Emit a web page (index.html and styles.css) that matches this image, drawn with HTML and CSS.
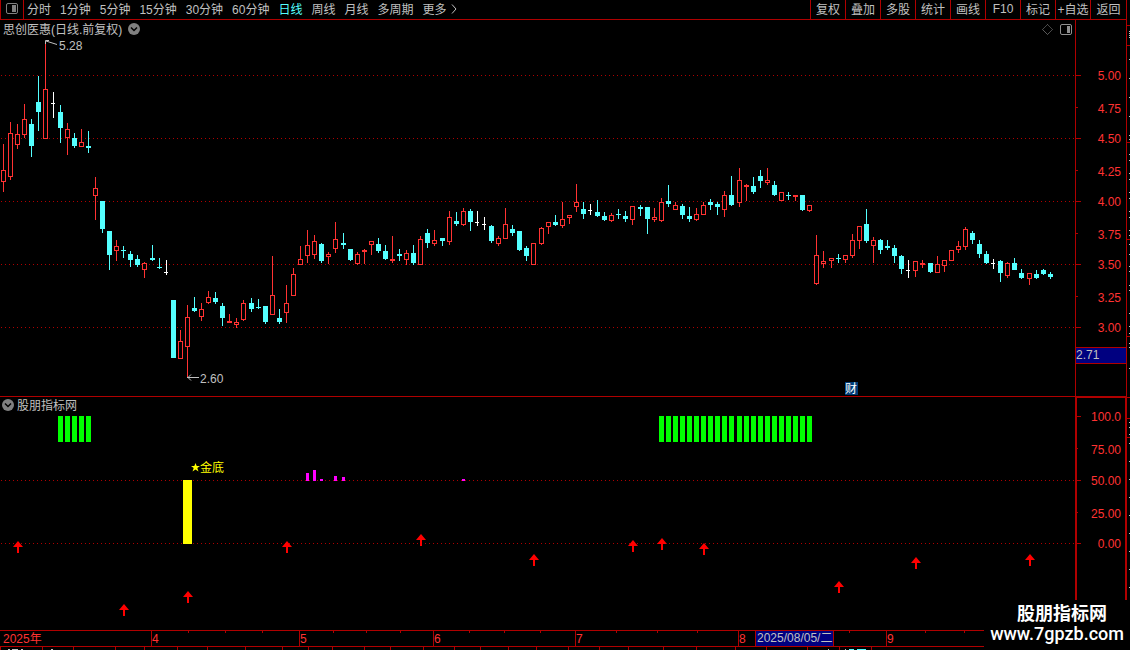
FILE: index.html
```html
<!DOCTYPE html>
<html lang="zh-CN">
<head>
  <meta charset="UTF-8">
  <title>思创医惠 日线</title>
  <link rel="stylesheet" href="styles.css">
</head>
<body>
<div class="terminal">

  <div class="workspace">
    <nav class="toolbar">
      <button type="button" class="panelToggle" aria-label="侧栏">
        <svg width="12" height="11"><rect x="0.5" y="0.5" width="11" height="10" rx="1.5" fill="none" stroke="#808080"/><rect x="6" y="2" width="4" height="7" fill="#808080"/></svg>
      </button>
      <div class="periods">
        <button type="button">分时</button>
        <button type="button">1分钟</button>
        <button type="button">5分钟</button>
        <button type="button">15分钟</button>
        <button type="button">30分钟</button>
        <button type="button">60分钟</button>
        <button type="button" class="active">日线</button>
        <button type="button">周线</button>
        <button type="button">月线</button>
        <button type="button">多周期</button>
        <button type="button" class="more">更多
          <svg width="6" height="10"><path d="M1 0.5L5 5L1 9.5" fill="none" stroke="#c0c0c0"/></svg>
        </button>
      </div>
      <div class="tools">
        <button type="button">复权</button>
        <button type="button">叠加</button>
        <button type="button">多股</button>
        <button type="button">统计</button>
        <button type="button">画线</button>
        <button type="button">F10</button>
        <button type="button">标记</button>
        <button type="button">+自选</button>
        <button type="button">返回</button>
      </div>
    </nav>

    <section class="panel pricePanel">
      <div class="plot">
        <svg class="chart" id="priceChart"></svg>
        <div class="panelHeader">
          <span>思创医惠(日线.前复权)</span>
          <button type="button" class="round" aria-label="展开">
            <svg width="12" height="12"><circle cx="6" cy="6" r="6" fill="#808080"/><path d="M3 4.5L6 7.5L9 4.5" fill="none" stroke="#000" stroke-width="1.5"/></svg>
          </button>
          <div class="panelIcons">
            <svg width="11" height="11"><path d="M5.5 0.5L10.5 5.5L5.5 10.5L0.5 5.5Z" fill="none" stroke="#808080" stroke-dasharray="1 0.5"/></svg>
            <svg width="12" height="11"><rect x="0.5" y="0.5" width="11" height="10" rx="1.5" fill="none" stroke="#909090"/><rect x="7" y="2" width="3" height="7" fill="#909090"/></svg>
          </div>
        </div>
      </div>
      <svg class="axis" id="priceAxis"></svg>
    </section>

    <section class="panel indicatorPanel">
      <div class="plot">
        <svg class="chart" id="indicatorChart"></svg>
        <div class="panelHeader">
          <button type="button" class="round" aria-label="展开">
            <svg width="12" height="12"><circle cx="6" cy="6" r="6" fill="#808080"/><path d="M3 4.5L6 7.5L9 4.5" fill="none" stroke="#000" stroke-width="1.5"/></svg>
          </button>
          <span>股朋指标网</span>
        </div>
      </div>
      <svg class="axis" id="indicatorAxis"></svg>
    </section>
  </div>

  <svg class="sideStrip" id="sideStrip"></svg>
</div>

<footer class="timeline">
  <svg class="dates" id="dates"></svg>
  <svg class="tabStrip" id="tabStrip"></svg>
</footer>

<div class="brand">
  <strong>股朋指标网</strong>
  <span>www.7gpzb.com</span>
</div>

<script src="chart.js"></script>
</body>
</html>
```

FILE: styles.css
```css
body {
  margin: 0;
  background: #000;
  color: #c0c0c0;
  overflow: hidden;
}

body, button, text {
  font-family: "Liberation Sans", "Noto Sans CJK SC", sans-serif;
  font-size: 12px;
}

svg {
  display: block;
}

button {
  display: flex;
  align-items: center;
  padding: 0;
  border: 0;
  background: none;
  color: inherit;
  white-space: nowrap;
  cursor: pointer;
}

.terminal {
  display: flex;
}

.workspace {
  flex: 1;
  min-width: 0;
}

.toolbar {
  display: flex;
  height: 19px;
  border-bottom: 1px solid #b00000;
}

.toolbar button {
  padding-bottom: 2px;
}

.toolbar .panelToggle {
  width: 24px;
  box-sizing: border-box;
  justify-content: center;
  border-left: 1px solid #b00000;
  border-right: 1px solid #b00000;
}

.periods {
  display: flex;
  flex: 1;
  gap: 9px;
  padding-left: 3px;
}

.periods .active {
  color: #54ffff;
}

.more {
  gap: 4px;
}

.tools {
  display: grid;
  grid-template-columns: repeat(8, 35px) 1fr;
  width: 316px;
}

.tools button {
  justify-content: center;
  border-left: 1px solid #b00000;
}

.panel {
  display: flex;
}

.pricePanel {
  height: 376px;
  border-bottom: 1px solid #b00000;
}

.indicatorPanel {
  height: 233px;
}

.plot {
  position: relative;
  flex: 1;
  min-width: 0;
}

.chart {
  width: 100%;
  height: 100%;
}

.axis {
  width: 50px;
  height: 100%;
  border-left: 1px solid #b00000;
}

.indicatorPanel .axis {
  box-sizing: border-box;
  width: 51px;
  border: 1px solid #b00000;
  border-left-width: 2px;
  border-bottom: 0;
}

.panelHeader {
  position: absolute;
  top: 0;
  left: 0;
  right: 0;
  display: flex;
  align-items: center;
  gap: 6px;
  height: 18px;
  padding: 0 3px;
}

.panelHeader span {
  padding-bottom: 2px;
}

.indicatorPanel .panelHeader {
  gap: 3px;
  height: 16px;
  padding: 0 2px;
}

.panelIcons {
  display: flex;
  gap: 7px;
  margin-left: auto;
}

.sideStrip {
  width: 3px;
  height: 630px;
  border-left: 1px solid #b00000;
}

.dates {
  width: 100%;
  height: 15px;
  border-top: 1px solid #b00000;
  border-bottom: 1px solid #b00000;
}

.tabStrip {
  width: 100%;
  height: 3px;
}

.brand {
  position: absolute;
  right: 0;
  bottom: 0;
  display: flex;
  flex-direction: column;
  align-items: flex-end;
  box-sizing: border-box;
  width: 146px;
  height: 50px;
  padding: 3px 6px 0 0;
  background: #000;
  color: #fff;
}

.brand strong {
  padding-right: 17px;
  font-size: 18px;
  line-height: 22px;
}

.brand span {
  font-family: Roboto, sans-serif;
  font-size: 18px;
  font-weight: 500;
  line-height: 18px;
}

.up {
  fill: #ff3232;
}

.down {
  fill: #54ffff;
}

.flat {
  fill: #fff;
}

.hollow {
  fill: #000;
  stroke: #ff3232;
}

.grid {
  stroke: #b00000;
  stroke-dasharray: 1 3;
}

.line {
  fill: #b00000;
}

.label {
  fill: #ff3232;
}

.note {
  fill: #c0c0c0;
}

.noteLine {
  fill: none;
  stroke: #c0c0c0;
}

.cursor {
  fill: #000080;
  stroke: #b00000;
}

.badge {
  fill: #003c78;
}

.badgeText {
  fill: #fff;
}

.green {
  fill: #00ff00;
}

.yellow {
  fill: #ffff00;
}

.magenta {
  fill: #ff00ff;
}

.arrow {
  fill: #ff0000;
}
```

FILE: chart.js
```js
// x, high, body top, body bottom, low, kind (u: up, d: down, f: flat)
const candles = [
  [3, 144, 170, 182, 192, 'u'], [10, 122, 133, 177, 180, 'u'], [17, 124, 134, 145, 149, 'u'],
  [24, 104, 119, 135, 138, 'u'], [31, 119, 124, 146, 157, 'd'], [38, 76, 102, 112, 131, 'd'],
  [45, 42, 89, 139, 139, 'u'], [53, 92, 103, 104, 118, 'f'], [60, 105, 112, 128, 143, 'd'],
  [67, 123, 129, 138, 155, 'u'], [74, 133, 138, 146, 148, 'd'], [81, 129, 142, 147, 147, 'u'],
  [88, 131, 146, 148, 153, 'd'], [95, 177, 188, 196, 220, 'u'], [102, 201, 201, 229, 233, 'd'],
  [109, 231, 231, 255, 270, 'd'], [116, 240, 246, 251, 261, 'u'], [123, 246, 250, 251, 258, 'd'],
  [130, 251, 254, 260, 267, 'd'], [137, 255, 259, 265, 267, 'd'], [144, 262, 263, 270, 278, 'u'],
  [152, 245, 258, 260, 261, 'd'], [159, 258, 267, 268, 269, 'd'], [166, 260, 272, 273, 275, 'f'],
  [173, 300, 300, 358, 358, 'd'], [180, 330, 341, 359, 359, 'u'], [187, 305, 317, 347, 378, 'u'],
  [194, 297, 308, 311, 312, 'd'], [201, 303, 309, 317, 321, 'u'], [208, 291, 297, 303, 304, 'u'],
  [215, 292, 298, 302, 304, 'd'], [222, 303, 306, 318, 326, 'd'], [229, 314, 321, 323, 323, 'u'],
  [236, 318, 322, 325, 328, 'u'], [243, 300, 303, 320, 321, 'u'], [251, 298, 303, 309, 312, 'd'],
  [258, 299, 307, 308, 309, 'd'], [265, 306, 306, 322, 324, 'd'], [272, 256, 295, 315, 315, 'u'],
  [279, 309, 318, 322, 324, 'd'], [286, 285, 303, 313, 323, 'u'], [293, 268, 274, 296, 296, 'u'],
  [300, 246, 259, 265, 265, 'u'], [307, 230, 245, 256, 263, 'u'], [314, 235, 241, 255, 259, 'u'],
  [321, 243, 244, 261, 263, 'd'], [328, 252, 254, 257, 264, 'u'], [335, 222, 239, 249, 253, 'u'],
  [343, 233, 243, 245, 249, 'd'], [350, 249, 249, 260, 261, 'd'], [357, 252, 254, 264, 265, 'u'],
  [364, 249, 250, 252, 264, 'u'], [371, 241, 241, 245, 255, 'u'], [378, 238, 244, 251, 253, 'd'],
  [385, 245, 251, 259, 260, 'd'], [392, 236, 259, 261, 263, 'u'], [399, 249, 254, 256, 261, 'd'],
  [406, 250, 253, 260, 265, 'u'], [413, 245, 253, 263, 265, 'd'], [420, 236, 239, 265, 265, 'u'],
  [427, 229, 233, 243, 248, 'd'], [434, 230, 240, 244, 246, 'u'], [442, 238, 238, 241, 246, 'd'],
  [449, 211, 217, 242, 245, 'u'], [456, 212, 221, 224, 226, 'd'], [463, 208, 211, 225, 226, 'u'],
  [470, 209, 211, 222, 231, 'd'], [477, 211, 222, 223, 226, 'f'], [484, 217, 224, 225, 230, 'f'],
  [491, 225, 226, 241, 243, 'd'], [498, 236, 238, 244, 246, 'u'], [505, 208, 224, 239, 239, 'u'],
  [512, 225, 229, 233, 236, 'd'], [519, 231, 231, 250, 251, 'd'], [526, 246, 248, 256, 261, 'd'],
  [533, 243, 243, 265, 265, 'u'], [541, 227, 228, 244, 245, 'u'], [548, 222, 222, 227, 234, 'u'],
  [555, 215, 222, 225, 226, 'd'], [562, 202, 219, 226, 228, 'u'], [569, 215, 215, 218, 224, 'u'],
  [576, 184, 202, 207, 212, 'u'], [583, 202, 209, 214, 219, 'd'], [590, 204, 210, 211, 215, 'f'],
  [597, 200, 212, 216, 217, 'd'], [604, 212, 216, 220, 221, 'd'], [611, 213, 215, 221, 222, 'u'],
  [618, 209, 214, 215, 219, 'd'], [625, 211, 216, 219, 222, 'd'], [632, 206, 206, 220, 225, 'u'],
  [640, 205, 207, 209, 216, 'd'], [647, 207, 207, 219, 234, 'd'], [654, 208, 217, 220, 222, 'u'],
  [661, 198, 202, 221, 222, 'u'], [668, 185, 201, 204, 207, 'd'], [675, 202, 205, 210, 210, 'u'],
  [682, 204, 206, 215, 219, 'd'], [689, 207, 216, 219, 222, 'd'], [696, 208, 214, 220, 221, 'u'],
  [703, 202, 205, 215, 215, 'u'], [710, 199, 202, 205, 210, 'd'], [717, 202, 204, 207, 215, 'd'],
  [724, 191, 195, 210, 217, 'u'], [731, 176, 195, 205, 206, 'd'], [739, 168, 180, 203, 207, 'u'],
  [746, 184, 185, 187, 201, 'u'], [753, 177, 186, 192, 194, 'd'], [760, 170, 176, 181, 188, 'd'],
  [767, 168, 180, 183, 185, 'u'], [774, 181, 185, 195, 196, 'd'], [781, 192, 192, 201, 201, 'u'],
  [788, 192, 195, 196, 200, 'd'], [795, 195, 195, 197, 201, 'u'], [802, 195, 195, 210, 211, 'd'],
  [809, 205, 205, 211, 212, 'u'], [816, 235, 255, 284, 285, 'u'], [823, 251, 261, 264, 268, 'u'],
  [831, 258, 258, 261, 268, 'u'], [838, 254, 258, 259, 263, 'd'], [845, 255, 255, 260, 263, 'u'],
  [852, 234, 240, 256, 258, 'u'], [859, 226, 226, 241, 249, 'u'], [866, 209, 224, 241, 243, 'd'],
  [873, 237, 240, 246, 263, 'u'], [880, 239, 240, 250, 254, 'd'], [887, 240, 246, 248, 250, 'd'],
  [894, 245, 248, 256, 263, 'd'], [901, 255, 256, 269, 274, 'd'], [908, 260, 270, 271, 278, 'f'],
  [915, 261, 261, 271, 277, 'u'], [922, 260, 263, 265, 268, 'u'], [930, 263, 263, 272, 273, 'd'],
  [937, 256, 264, 273, 273, 'u'], [944, 260, 260, 266, 272, 'u'], [951, 250, 250, 261, 261, 'u'],
  [958, 241, 246, 250, 253, 'u'], [965, 227, 229, 247, 250, 'u'], [972, 231, 233, 240, 244, 'd'],
  [979, 240, 244, 254, 258, 'd'], [986, 251, 254, 263, 264, 'd'], [993, 259, 263, 264, 269, 'f'],
  [1000, 260, 261, 273, 282, 'd'], [1007, 262, 263, 276, 278, 'u'], [1014, 258, 263, 270, 270, 'd'],
  [1021, 269, 273, 278, 279, 'd'], [1029, 273, 273, 279, 285, 'u'], [1036, 270, 274, 278, 279, 'd'],
  [1043, 269, 270, 274, 275, 'd'], [1050, 272, 274, 277, 279, 'd']
];

// top edges of the two panels
const PRICE_TOP = 20;
const IND_TOP = 397;

function add(id, tag, attrs, text) {
  const el = document.createElementNS('http://www.w3.org/2000/svg', tag);
  for (const key in attrs) {
    el.setAttribute(key, attrs[key]);
  }
  if (text) {
    el.textContent = text;
  }
  document.getElementById(id).appendChild(el);
}

function rect(id, cls, x, y, width, height) {
  add(id, 'rect', {class: cls, x, y, width, height});
}

function label(id, cls, x, y, text, anchor) {
  add(id, 'text', {class: cls, x, y, 'text-anchor': anchor || 'start'}, text);
}

function gridLine(id, y) {
  add(id, 'line', {class: 'grid', x1: 1, x2: '100%', y1: y + 0.5, y2: y + 0.5});
}

function drawCandle([x, high, top, bottom, low, kind]) {
  const id = 'priceChart';
  const cls = {u: 'up', d: 'down', f: 'flat'}[kind];
  rect(id, cls, x, high - PRICE_TOP, 1, low - high);
  if (kind === 'u' && bottom - top > 2) {
    add(id, 'rect', {class: 'hollow', x: x - 1.5, y: top - PRICE_TOP + 0.5, width: 4, height: bottom - top - 1});
  } else if (kind === 'f') {
    rect(id, cls, x - 2, top - PRICE_TOP, 4, 1);
  } else {
    rect(id, cls, x - 2, top - PRICE_TOP, 5, bottom - top);
  }
}

function drawPrice() {
  [75, 138, 201, 264, 327].forEach(y => gridLine('priceChart', y - PRICE_TOP));
  candles.forEach(drawCandle);

  add('priceChart', 'path', {class: 'noteLine', d: 'M45.5 24V20.5H49M46 21L57 24.5'});
  label('priceChart', 'note', 59, 30, '5.28');
  add('priceChart', 'path', {class: 'noteLine', d: 'M187 357.5H199M191 354.5L188 357.5L191 360.5'});
  label('priceChart', 'note', 200, 363, '2.60');
  rect('priceChart', 'badge', 845, 362, 13, 13);
  label('priceChart', 'badgeText', 845, 373, '财');

  const prices = ['5.00', '4.75', '4.50', '4.25', '4.00', '3.75', '3.50', '3.25', '3.00'];
  const rows = [75, 107, 138, 170, 201, 233, 264, 296, 327];
  prices.forEach((price, i) => {
    rect('priceAxis', 'line', 0, rows[i] - PRICE_TOP, i % 2 ? 2 : 5, 1);
    label('priceAxis', 'label', 45, rows[i] - PRICE_TOP + (i % 2 ? 6 : 5), price, 'end');
  });
  add('priceAxis', 'rect', {class: 'cursor', x: -0.5, y: 327.5, width: 51, height: 16});
  label('priceAxis', 'note', 0, 339, '2.71');
}

function drawIndicator() {
  const id = 'indicatorChart';
  [480, 543].forEach(y => gridLine(id, y - IND_TOP));

  for (let i = 0; i < 5; i++) {
    rect(id, 'green', 58 + i * 7, 19, 5, 26);
  }
  for (let i = 0; i < 22; i++) {
    rect(id, 'green', 659 + i * 7 + (i > 10 ? 1 : 0), 19, 5, 26);
  }

  rect(id, 'yellow', 183, 83, 9, 64);
  add(id, 'path', {class: 'yellow', d: 'M195.5 66L196.7 69H200L197.3 71L198.5 74.5L195.5 72.5L192.5 74.5L193.7 71L191 69H194.3Z'});
  label(id, 'yellow', 200, 75, '金底');

  [[306, 473], [313, 470], [320, 479], [334, 476], [342, 477], [462, 479]].forEach(([x, y]) => {
    rect(id, 'magenta', x, y - IND_TOP, 3, 481 - y);
  });

  const arrows = [
    [18, 541], [124, 604], [188, 591], [287, 541], [421, 534], [534, 554], [633, 540],
    [662, 538], [704, 543], [839, 581], [916, 557], [1030, 554]
  ];
  arrows.forEach(([x, y]) => {
    const top = y - IND_TOP;
    add(id, 'path', {class: 'arrow', d: `M${x} ${top}L${x + 5} ${top + 6}H${x + 1}V${top + 12}H${x - 1}V${top + 6}H${x - 5}Z`});
  });

  const values = ['100.0', '75.00', '50.00', '25.00', '0.00'];
  const rows = [416, 448, 480, 512, 543];
  values.forEach((value, i) => {
    rect('indicatorAxis', 'line', 0, rows[i] - IND_TOP - 1, i % 2 ? 1 : 4, 1);
    label('indicatorAxis', 'label', 44, rows[i] - IND_TOP + (i % 2 ? 5 : 4), value, 'end');
  });
}

function drawDates() {
  label('dates', 'label', 3, 12, '2025年');
  [[151, '4'], [299, '5'], [433, '6'], [575, '7'], [738, '8'], [886, '9']].forEach(([x, month]) => {
    rect('dates', 'line', x, 0, 1, 16);
    label('dates', 'label', x + 1, 12, month);
  });
  [188, 225, 262, 333, 366, 400, 469, 504, 540, 616, 657, 697, 849, 925, 964].forEach(x => {
    rect('dates', 'line', x, 0, 1, 2);
  });
  add('dates', 'rect', {class: 'cursor', x: 755.5, y: -0.5, width: 78, height: 16});
  label('dates', 'note', 757, 11, '2025/08/05/二');

  [0, 42, 73, 115, 144, 177, 207, 245, 282, 308, 332, 364, 390, 423, 454, 480, 508, 536, 568, 599,
    628, 663, 696, 735, 766, 807, 839, 871].forEach(x => {
    rect('tabStrip', 'line', x, 0, 1, 3);
  });
  [[8, 2], [12, 6], [21, 2], [51, 2], [828, 1], [845, 1]].forEach(([x, w]) => {
    rect('tabStrip', 'note', x, 2, w, 1);
  });
  rect('tabStrip', 'down', 849, 2, 5, 1);
  rect('tabStrip', 'down', 857, 2, 9, 1);
}

// visible edge of the quote list on the right
function drawSideStrip() {
  [25, 45, 142, 239, 336, 397, 418, 437].forEach(y => rect('sideStrip', 'line', 0, y, 3, 1));
  [31, 33, 35, 37, 59, 78, 97, 116, 135, 139, 154, 160, 173, 179, 192, 198, 211, 217, 230, 235, 244,
    254, 266, 271, 285, 290, 313, 326, 333, 343, 347, 368, 422, 427, 434, 443, 461, 479, 497, 515,
    533, 551, 569, 587].forEach(y => {
    rect('sideStrip', 'note', 2, y, 1, 1);
  });
}

drawPrice();
drawIndicator();
drawDates();
drawSideStrip();
```
